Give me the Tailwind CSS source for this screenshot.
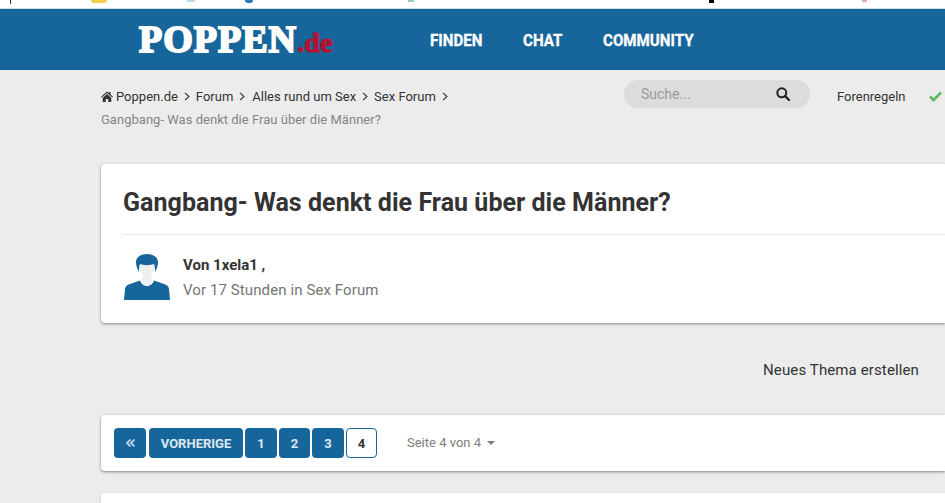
<!DOCTYPE html>
<html lang="de">
<head>
  <meta charset="UTF-8" />
  <title>Gangbang- Was denkt die Frau über die Männer? - Poppen.de</title>
  <script src="https://cdn.jsdelivr.net/npm/@tailwindcss/browser@4"></script>
</head>
<body class="bg-[#ececec] h-[503px] overflow-hidden font-['Roboto',sans-serif] text-[#333]">
  <!-- browser bookmarks bar, only the bottom edge is visible -->
  <div class="h-[9px] bg-white border-b border-[#c9dcea] flex items-start overflow-hidden">
    <span class="ml-[10px] w-px h-[4px] bg-[#333]"></span>
    <span class="ml-[80px] w-[16px] h-[3px] bg-[#f5cf4a] rounded-b-sm"></span>
    <span class="ml-[80px] w-[8px] h-[2px] bg-[#b9d6e6]"></span>
    <span class="ml-[50px] w-[8px] h-[3px] bg-[#2a78b5] rounded-b"></span>
    <span class="ml-[155px] w-[6px] h-[2px] bg-[#8fd0c8]"></span>
    <span class="ml-[295px] w-[5px] h-[3px] bg-black"></span>
    <span class="ml-[148px] w-[5px] h-[2px] bg-[#e8a9a9]"></span>
  </div>

  <!-- main nav -->
  <header class="h-[61px] bg-[#17669b] flex items-center pl-[139px]">
    <a class="w-[291px] flex items-baseline font-['Liberation_Serif',serif] font-bold mt-[-1px]">
      <span class="text-[38px] leading-none tracking-[1px] text-white [-webkit-text-stroke:2px_white]">POPPEN</span>
      <span class="text-[28px] leading-none tracking-[0.2px] text-[#b8112e] [-webkit-text-stroke:1px_#b8112e]">.de</span>
    </a>
    <nav class="flex items-center text-white font-bold text-[17px] mt-[2px] [-webkit-text-stroke:0.300px_white]">
      <a class="w-[93px] inline-block origin-left scale-x-[0.89] whitespace-nowrap">FINDEN</a>
      <a class="w-[80px] inline-block origin-left scale-x-[0.89] whitespace-nowrap">CHAT</a>
      <a class="inline-block origin-left scale-x-[0.89] whitespace-nowrap">COMMUNITY</a>
    </nav>
  </header>

  <main class="w-[945px] pl-[101px]">
    <!-- breadcrumb + search row -->
    <div class="h-[94px] flex items-start">
      <div class="w-[523px] pt-[15px] text-[13px] leading-[23px]">
        <div class="flex items-center">
          <svg class="w-[12px] h-[11px] mr-[3px]" viewBox="0 0 24 22" fill="#333"><path d="M12 1 0 11.5l1.4 1.6L12 4l10.6 9.1 1.4-1.6L19 7.2V2h-3.5v2.200zM12 6 3.500 13.300V22h6v-6h5v6h6v-8.700z"/></svg>
          <span>Poppen.de</span>
          <svg class="w-[6px] h-[9px] mx-[6px]" viewBox="0 0 6 9" fill="none" stroke="#333" stroke-width="1.100"><path d="m1 .8 4 3.700-4 3.700"/></svg>
          <span>Forum</span>
          <svg class="w-[6px] h-[9px] ml-[6px] mr-[7px]" viewBox="0 0 6 9" fill="none" stroke="#333" stroke-width="1.100"><path d="m1 .8 4 3.700-4 3.700"/></svg>
          <span>Alles rund um Sex</span>
          <svg class="w-[6px] h-[9px] mx-[6px]" viewBox="0 0 6 9" fill="none" stroke="#333" stroke-width="1.100"><path d="m1 .8 4 3.700-4 3.700"/></svg>
          <span>Sex Forum</span>
          <svg class="w-[6px] h-[9px] mx-[6px]" viewBox="0 0 6 9" fill="none" stroke="#333" stroke-width="1.100"><path d="m1 .8 4 3.700-4 3.700"/></svg>
        </div>
        <div class="text-[#858585] tracking-[0.02px]">Gangbang- Was denkt die Frau über die Männer?</div>
      </div>
      <div class="mt-[10px] w-[186px] h-[28px] rounded-full bg-[#dcdcdc] flex items-center justify-between pl-[17px] pr-[20px] text-[14px] text-[#999]">
        <span>Suche...</span>
        <svg class="w-[14px] h-[14px]" viewBox="0 0 14 14" fill="none" stroke="#222" stroke-width="2"><circle cx="5.800" cy="5.800" r="4.500"/><path d="m9 9 4 4" stroke-linecap="round" stroke-width="2.400"/></svg>
      </div>
      <span class="ml-[27px] pt-[18px] text-[13px] leading-[17px]">Forenregeln</span>
      <svg class="ml-[23px] mt-[21px] w-[13px] h-[11px]" viewBox="0 0 13 11" fill="none" stroke="#5cb85c" stroke-width="2.600"><path d="m1 5.500 3.600 3.600L12 1.500"/></svg>
    </div>

    <!-- topic header card -->
    <section class="h-[159px] bg-white rounded-l-[4px] shadow-[0_1px_3px_rgba(0,0,0,0.45)] pl-[22px]">
      <h1 class="h-[71px] flex items-center text-[25px] tracking-[0.04px] font-bold text-[#333] border-b border-[#e8e8e8] pt-[7px]">Gangbang- Was denkt die Frau über die Männer?</h1>
      <div class="flex mt-[18px]">
        <svg class="w-[48px] h-[47px] mr-[12px]" viewBox="0 0 48 47">
          <path fill="#17669b" d="M1 47l1-11c.5-3 2-4 5-5l10-3.500c1 3 3.500 5.500 7 5.500s6-2.500 7-5.500L41 31c3 1 4.500 2 5 5l1 11z"/>
          <path fill="#efeff2" d="M18 27c1-1 2-2.500 2-5-2-2-4-6-4-11h16c0 5-2 9-4 11 0 2.500 1 4 2 5-1 3-3.500 5.500-6 5.500s-5-2.500-6-5.500z"/>
          <path fill="#17669b" d="M16 19c-2-3-3-7-3-10 0-5 5-8 11-8s11 3 11 8c0 3-1 7-3 10 0-3 0-6-1-8-4 1.500-10 1.500-14 0-1 2-1 5-1 8z"/>
        </svg>
        <div>
          <div class="text-[15px] font-bold leading-[20px] pt-[2px]">Von 1xela1 ,</div>
          <div class="text-[15px] leading-[20px] mt-[5px] tracking-[0.1px] text-[#757575]">Vor 17 Stunden in Sex Forum</div>
        </div>
      </div>
    </section>

    <div class="h-[92px] w-[818px] pt-[3px] flex items-center justify-end text-[15px] tracking-[0.12px]">Neues Thema erstellen</div>

    <!-- pagination card -->
    <section class="h-[56px] bg-white rounded-l-[4px] shadow-[0_1px_3px_rgba(0,0,0,0.45)] pl-[13px] flex items-center text-[13px] font-bold">
      <a class="w-[32px] h-[30px] mr-[3px] rounded-[4px] bg-[#17669b] text-[#b9d4e6] flex items-center justify-center">
        <svg class="w-[9px] h-[8px]" viewBox="0 0 9 8" fill="none" stroke="currentColor" stroke-width="1.800"><path d="M4.500.5 1 4l3.500 3.500M8.500.5 5 4l3.500 3.500"/></svg>
      </a>
      <a class="w-[94px] h-[30px] mr-[2px] pt-[2px] rounded-[4px] bg-[#17669b] text-white/85 flex items-center justify-center">VORHERIGE</a>
      <a class="w-[32px] h-[30px] mr-[2px] pt-[2px] rounded-[4px] bg-[#17669b] text-white/85 flex items-center justify-center">1</a>
      <a class="w-[31px] h-[30px] mr-[2px] pt-[2px] rounded-[4px] bg-[#17669b] text-white/85 flex items-center justify-center">2</a>
      <a class="w-[32px] h-[30px] mr-[2px] pt-[2px] rounded-[4px] bg-[#17669b] text-white/85 flex items-center justify-center">3</a>
      <a class="w-[31px] h-[30px] pt-[2px] rounded-[4px] bg-white border border-[#17669b] text-[#333] flex items-center justify-center">4</a>
      <span class="ml-[30px] font-normal text-[#7d7d7d] flex items-center">Seite 4 von 4
        <svg class="ml-[6px] w-[8px] h-[4px]" viewBox="0 0 8 4" fill="#7d7d7d"><path d="M0 0h8L4 4z"/></svg>
      </span>
    </section>

    <section class="mt-[22px] h-[10px] bg-white rounded-tl-[4px] shadow-[0_1px_3px_rgba(0,0,0,0.2)]"></section>
  </main>
</body>
</html>
